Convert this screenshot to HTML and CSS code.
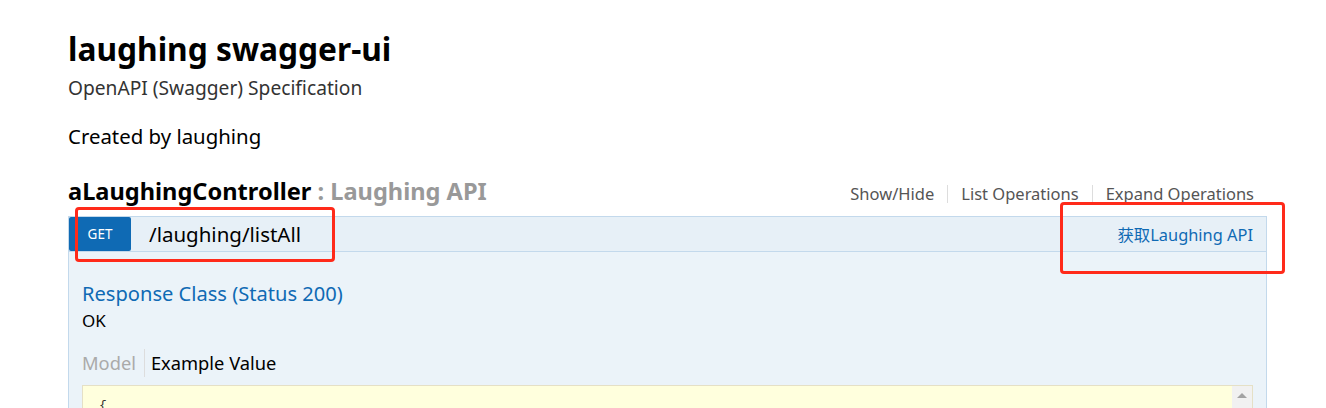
FILE: index.html
```html
<!DOCTYPE html>
<html lang="en">
<head>
<meta charset="utf-8">
<title>laughing swagger-ui</title>
<link rel="stylesheet" href="styles.css">
</head>
<body>
<div class="page">
  <h1 class="title">laughing swagger-ui</h1>
  <div class="subtitle">OpenAPI (Swagger) Specification</div>
  <div class="created">Created by laughing</div>

  <div class="resource-head">
    <h2 class="resource-name">aLaughingController <span class="resource-desc">: Laughing API</span></h2>
    <ul class="resource-links">
      <li>Show/Hide</li>
      <li>List Operations</li>
      <li>Expand Operations</li>
    </ul>
  </div>

  <div class="operation">
    <div class="op-heading">
      <span class="verb">GET</span>
      <span class="path">/laughing/listAll</span>
      <span class="summary">获取Laughing API</span>
    </div>
    <div class="op-body">
      <h4 class="resp-title">Response Class (Status 200)</h4>
      <div class="resp-ok">OK</div>
      <div class="tabs">
        <span class="tab tab-off">Model</span>
        <span class="tab tab-on">Example Value</span>
      </div>
      <div class="code">
        <pre class="code-text">{</pre>
        <div class="scrollbar"><span class="arrow"></span></div>
      </div>
    </div>
  </div>

  <div class="mark mark-left"></div>
  <div class="mark mark-right"></div>
</div>
</body>
</html>
```

FILE: styles.css
```css
html, body {
  margin: 0;
  padding: 0;
  background: #ffffff;
}
body {
  font-family: "Noto Sans", "Noto Sans CJK SC", sans-serif;
  color: #000;
  overflow: hidden;
  height: 408px;
}
.page {
  position: relative;
  width: 1199px;
  padding: 28px 0 0 68px;
}
.title {
  margin: 0;
  font-size: 31.7px;
  line-height: 42px;
  font-weight: 700;
  color: #000;
}
.subtitle {
  margin-top: 6px;
  font-size: 19.2px;
  line-height: 24px;
  color: #333;
}
.created {
  margin-top: 23px;
  font-size: 20.4px;
  line-height: 26px;
  color: #000;
}
.resource-head {
  margin-top: 27px;
  display: flex;
  justify-content: space-between;
  align-items: center;
  height: 30px;
}
.resource-name {
  margin: 0;
  font-size: 23.6px;
  line-height: 30px;
  font-weight: 700;
  color: #000;
}
.resource-desc {
  color: #999;
}
.resource-links {
  list-style: none;
  margin: 5px 0 0 0;
  padding: 0 13px 0 0;
  display: flex;
  font-size: 16.5px;
  line-height: 18px;
  color: #555;
}
.resource-links li {
  padding: 0 13px;
  border-left: 1px solid #ddd;
}
.resource-links li:first-child {
  border-left: none;
}
.resource-links li:last-child {
  padding-right: 0;
}
.operation {
  margin-top: 10px;
}
.op-heading {
  display: flex;
  align-items: center;
  height: 34px;
  background: #e7f0f7;
  border: 1px solid #c3d9ec;
  padding-right: 13px;
}
.verb {
  width: 62px;
  height: 34px;
  line-height: 34px;
  text-align: center;
  background: #0f6ab4;
  color: #fff;
  font-size: 13.5px;
  border-radius: 2px;
}
.path {
  margin-left: 18px;
  font-size: 20.5px;
  color: #000;
}
.summary {
  margin-left: auto;
  font-size: 16.4px;
  color: #0f6ab4;
}
.op-body {
  background: #ebf3f9;
  border: 1px solid #c3d9ec;
  border-top: none;
  padding: 29px 13px 0 13px;
  height: 200px;
}
.resp-title {
  margin: 0;
  font-size: 20.1px;
  line-height: 26px;
  font-weight: 400;
  color: #0f6ab4;
}
.resp-ok {
  margin-top: 2px;
  font-size: 17px;
  line-height: 24px;
  color: #000;
}
.tabs {
  margin-top: 16px;
  display: flex;
  align-items: center;
  height: 28px;
  font-size: 18.3px;
}
.tab-off {
  color: #aaa;
  padding-right: 8px;
  border-right: 1px solid #ddd;
  line-height: 28px;
}
.tab-on {
  color: #000;
  padding-left: 6px;
  line-height: 28px;
}
.code {
  margin-top: 8px;
  display: flex;
  background: #ffffdd;
  border: 1px solid #e5e0c6;
  height: 120px;
}
.code-text {
  flex: 1;
  margin: 0;
  padding: 12px 16px;
  font-family: "Liberation Mono", monospace;
  font-size: 13px;
  color: #333;
}
.scrollbar {
  width: 20px;
  background: #f1f1f1;
  display: flex;
  justify-content: center;
}
.arrow {
  margin-top: 7px;
  width: 0;
  height: 0;
  border-left: 5px solid transparent;
  border-right: 5px solid transparent;
  border-bottom: 5px solid #a3a3a3;
}
.mark {
  position: absolute;
  border: 3px solid #ff2a1a;
  border-radius: 4px;
}
.mark-left {
  left: 75px;
  top: 207px;
  width: 254px;
  height: 49px;
}
.mark-right {
  left: 1060px;
  top: 202px;
  width: 219px;
  height: 66px;
}
```
